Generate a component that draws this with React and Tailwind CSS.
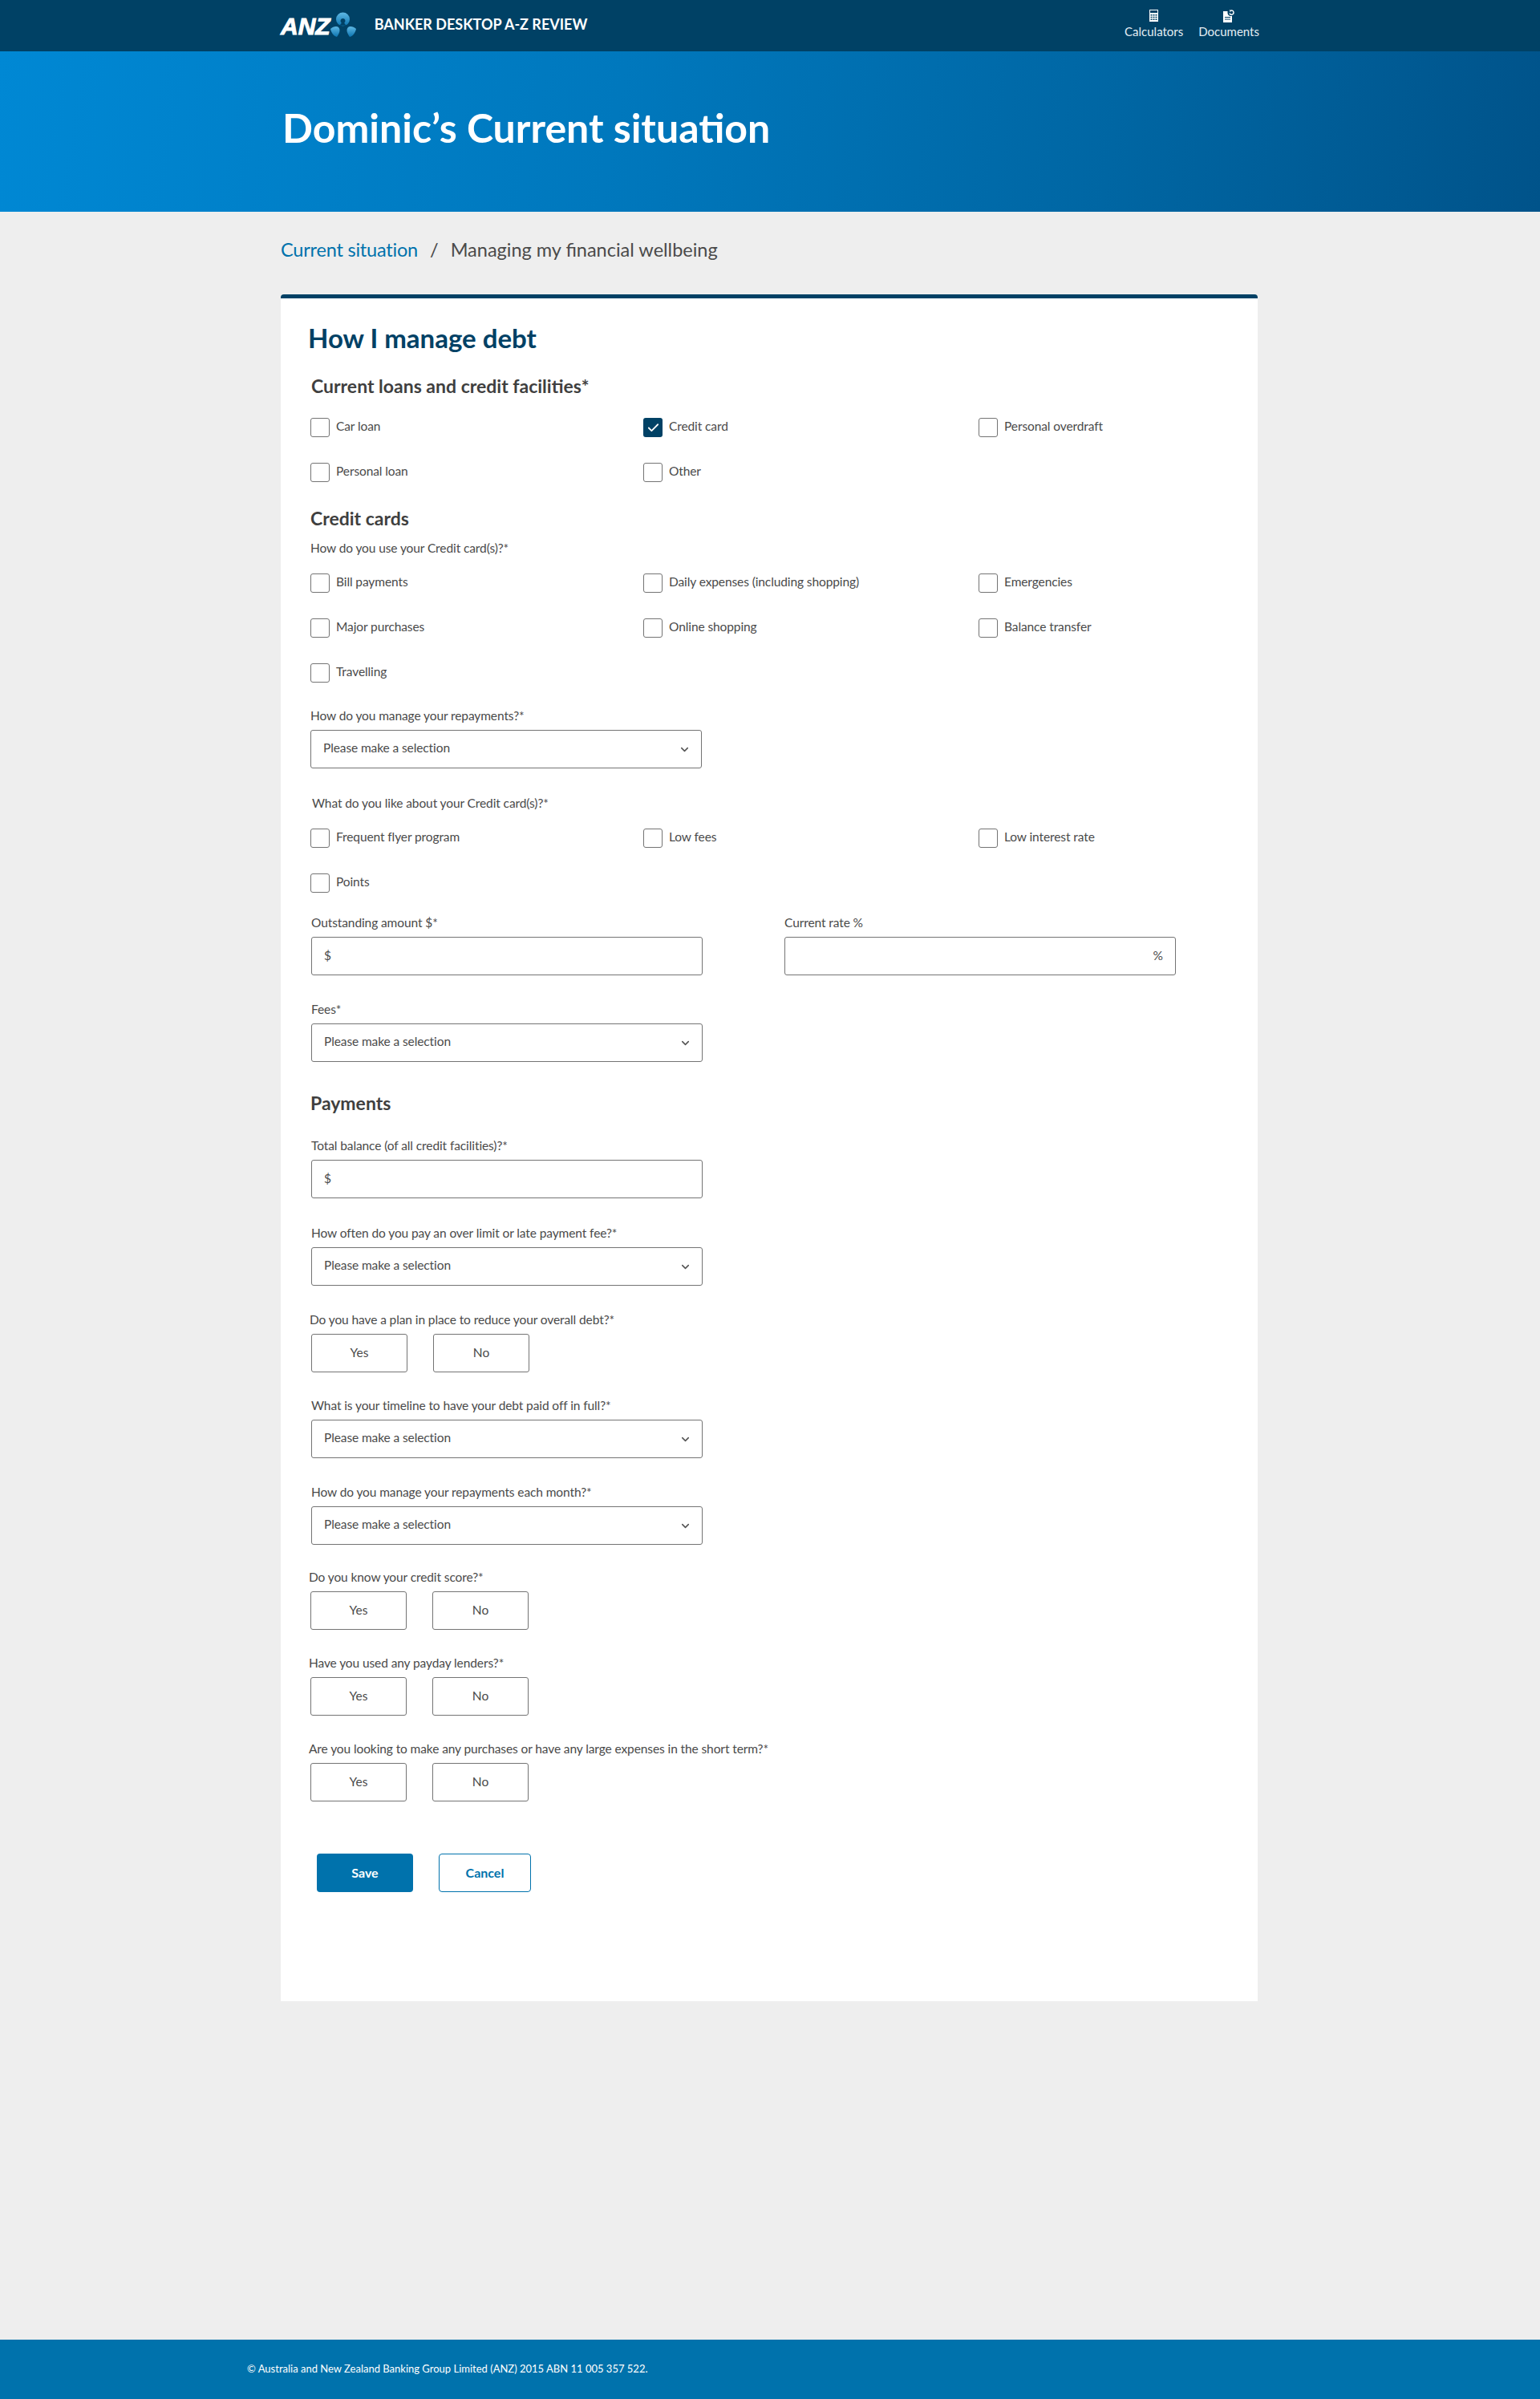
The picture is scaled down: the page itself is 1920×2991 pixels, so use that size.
import React from 'react'
import { ChevronDown, Check } from 'lucide-react'

const font = { fontFamily: 'Lato, "Open Sans", sans-serif' }

function Logo() {
  return (
    <div className="flex items-center">
      <span className="text-[30px] leading-none font-bold italic text-white font-['Liberation_Sans',sans-serif] [-webkit-text-stroke:1px_white] mt-[6px]">ANZ</span>
      <svg viewBox="0 0 32 32" className="w-[32px] h-[32px] mt-[2px]">
        <defs>
          <linearGradient id="drop" x1="0" y1="0" x2="0" y2="1">
            <stop offset="0" stopColor="#5fb8e4" />
            <stop offset="1" stopColor="#0b74b0" />
          </linearGradient>
        </defs>
        <circle cx="15.500" cy="9" r="8.500" fill="url(#drop)" />
        <path d="M15.500 8a3 3 0 0 1 1.800 5.400c.4 1.600 1.700 2.700 3.200 3.300h-10c1.500-.6 2.800-1.700 3.200-3.300A3 3 0 0 1 15.500 8z" fill="#004165" />
        <path d="M0 21c3-3 8-4 10-2 3 3 1 8-2 12-4-1-7-5-8-10z" fill="url(#drop)" />
        <path d="M32 21c-3-3-8-4-10-2-3 3-1 8 2 12 4-1 7-5 8-10z" fill="url(#drop)" />
      </svg>
    </div>
  )
}

function CalculatorIcon() {
  return (
    <svg viewBox="0 0 11 15" className="w-[11px] h-[15px]">
      <path fillRule="evenodd" fill="#fff" d="M0 0h11v15H0zM1 1v3h9V1zM1.500 6v1.500h2V6zm3 0v1.500h2V6zm3 0v1.500h2V6zm-6 2.700v1.500h2V8.700zm3 0v1.500h2V8.700zm3 0v1.500h2V8.700zm-6 2.700v1.500h2v-1.500zm3 0v1.500h2v-1.500zm3 0v1.500h2v-1.500z" />
    </svg>
  )
}

function DocumentIcon() {
  return (
    <svg viewBox="0 0 14 16" className="w-[14px] h-[16px]">
      <path fill="#fff" fillRule="evenodd" d="M0 2h5.500v2.500a4 4 0 0 0 5.500 3.300V16H0zM2 9v1h7V9zm0 2.500v1h7v-1z" />
      <path fill="none" stroke="#fff" strokeWidth="1.400" d="M8 4.500a2.600 2.600 0 1 0 2-3.500" />
      <path fill="#fff" d="M8 0l2.800 1.200L8.500 3z" />
    </svg>
  )
}

function Header() {
  return (
    <header className="h-[64px] bg-[#004165] flex">
      <div className="w-[1220px] mx-auto flex justify-between">
        <div className="flex items-center h-[60px] gap-[23px]">
          <Logo />
          <span className="text-[18px] font-bold text-white">BANKER DESKTOP A-Z REVIEW</span>
        </div>
        <nav className="flex gap-[19px] pt-[12px] text-[15px] text-[#e3edf3] leading-[20px]">
          <a className="flex flex-col items-center">
            <CalculatorIcon />
            <span className="mt-[2px]">Calculators</span>
          </a>
          <a className="flex flex-col items-center">
            <DocumentIcon />
            <span className="mt-[1px]">Documents</span>
          </a>
        </nav>
      </div>
    </header>
  )
}

function FieldLabel({ children, className }) {
  return <p className={`text-[15.500px] leading-[20px] tracking-[-0.100px] text-[#4a4a4a] ${className}`}>{children}</p>
}

function Heading({ children, className }) {
  return <h3 className={`text-[23px] leading-[28px] font-bold text-[#3f3f3f] ${className}`}>{children}</h3>
}

function CheckItem({ label, checked }) {
  return (
    <label className="flex items-center gap-[8px] h-[24px]">
      {checked ? (
        <span className="w-[24px] h-[24px] rounded-[3px] bg-[#004165] flex items-center justify-center">
          <Check size={17} color="#fff" strokeWidth={2.500} />
        </span>
      ) : (
        <span className="w-[24px] h-[24px] rounded-[3px] border border-[#747474] bg-white" />
      )}
      <span className="text-[15.500px] tracking-[-0.100px] text-[#4a4a4a] -mt-[2px]">{label}</span>
    </label>
  )
}

function CheckGrid({ items, className }) {
  return (
    <div className={`grid grid-cols-[415px_418px_1fr] gap-y-[32px] ${className}`}>
      {items.map((item) => (
        <CheckItem key={item} label={item} checked={item === 'Credit card'} />
      ))}
    </div>
  )
}

function SelectBox({ className }) {
  return (
    <div className={`w-[488px] h-[48px] border border-[#747474] rounded-[3px] flex items-center justify-between pl-[15px] pr-[13px] ${className}`}>
      <span className="text-[15.500px] tracking-[-0.100px] text-[#4a4a4a] -mt-[2px]">Please make a selection</span>
      <ChevronDown size={15} color="#555" strokeWidth={2.500} />
    </div>
  )
}

function TextBox({ prefix, suffix, className }) {
  return (
    <div className={`w-[488px] h-[48px] border border-[#747474] rounded-[3px] flex items-center justify-between px-[15px] text-[15.500px] text-[#4a4a4a] ${className}`}>
      <span>{prefix}</span>
      <span>{suffix}</span>
    </div>
  )
}

function YesNo({ className }) {
  return (
    <div className={`flex gap-[32px] mt-[8px] ${className}`}>
      {['Yes', 'No'].map((t) => (
        <button key={t} className="w-[120px] h-[48px] border border-[#747474] rounded-[3px] text-[15.500px] text-[#4a4a4a] bg-white">{t}</button>
      ))}
    </div>
  )
}

export default function App() {
  return (
    <div className="min-h-[2991px] flex flex-col bg-[#eeeeee]" style={font}>
      <Header />
      <div className="h-[200px] bg-[linear-gradient(100deg,#0088d4_0%,#0078bd_40%,#0066a3_72%,#00538a_100%)]">
        <h1 className="w-[1220px] mx-auto pt-[65px] pl-[2px] text-[50px] leading-[60px] font-bold text-white">Dominic’s Current situation</h1>
      </div>

      <main className="w-[1220px] mx-auto">
        <div className="pt-[32px] flex text-[23.500px] leading-[30px] text-[#4a4a4a]">
          <a className="text-[#0072ac] tracking-[-0.200px]">Current situation</a>
          <span className="mx-[15px]">/</span>
          <span>Managing my financial wellbeing</span>
        </div>

        <section className="mt-[41px] bg-white border-t-[5px] border-[#004165] rounded-t-[4px] w-[1218px] pl-[37px] pt-[29px] pb-[136px]">
          <h2 className="-ml-[3px] text-[33px] leading-[40px] font-bold text-[#004165]">How I manage debt</h2>

          <Heading className="mt-[26px] ml-[1px]">Current loans and credit facilities*</Heading>
          <CheckGrid className="mt-[26px]" items={['Car loan', 'Credit card', 'Personal overdraft', 'Personal loan', 'Other']} />

          <Heading className="mt-[31px]">Credit cards</Heading>
          <FieldLabel className="mt-[13px]">How do you use your Credit card(s)?*</FieldLabel>
          <CheckGrid className="mt-[22px]" items={['Bill payments', 'Daily expenses (including shopping)', 'Emergencies', 'Major purchases', 'Online shopping', 'Balance transfer', 'Travelling']} />

          <FieldLabel className="mt-[31px]">How do you manage your repayments?*</FieldLabel>
          <SelectBox className="mt-[8px]" />

          <FieldLabel className="mt-[33px] ml-[2px]">What do you like about your Credit card(s)?*</FieldLabel>
          <CheckGrid className="mt-[22px]" items={['Frequent flyer program', 'Low fees', 'Low interest rate', 'Points']} />

          <div className="mt-[27px] ml-[1px] flex gap-[102px]">
            <div>
              <FieldLabel>Outstanding amount $*</FieldLabel>
              <TextBox className="mt-[8px]" prefix="$" />
            </div>
            <div>
              <FieldLabel>Current rate %</FieldLabel>
              <TextBox className="mt-[8px]" suffix="%" />
            </div>
          </div>

          <FieldLabel className="mt-[32px] ml-[1px]">Fees*</FieldLabel>
          <SelectBox className="mt-[8px] ml-[1px]" />

          <Heading className="mt-[37px]">Payments</Heading>
          <FieldLabel className="mt-[29px] ml-[1px]">Total balance (of all credit facilities)?*</FieldLabel>
          <TextBox className="mt-[8px] ml-[1px]" prefix="$" />

          <FieldLabel className="mt-[33px] ml-[1px]">How often do you pay an over limit or late payment fee?*</FieldLabel>
          <SelectBox className="mt-[8px] ml-[1px]" />

          <FieldLabel className="mt-[32px] -ml-[1px]">Do you have a plan in place to reduce your overall debt?*</FieldLabel>
          <YesNo className="ml-[1px]" />

          <FieldLabel className="mt-[31px] ml-[1px]">What is your timeline to have your debt paid off in full?*</FieldLabel>
          <SelectBox className="mt-[8px] ml-[1px]" />

          <FieldLabel className="mt-[32px] ml-[1px]">How do you manage your repayments each month?*</FieldLabel>
          <SelectBox className="mt-[8px] ml-[1px]" />

          <FieldLabel className="mt-[30px] -ml-[2px]">Do you know your credit score?*</FieldLabel>
          <YesNo />

          <FieldLabel className="mt-[31px] -ml-[2px]">Have you used any payday lenders?*</FieldLabel>
          <YesNo />

          <FieldLabel className="mt-[31px] -ml-[2px]">Are you looking to make any purchases or have any large expenses in the short term?*</FieldLabel>
          <YesNo />

          <div className="mt-[65px] ml-[8px] flex gap-[32px]">
            <button className="w-[120px] h-[48px] rounded-[4px] bg-[#0072ac] text-white text-[16px] font-bold">Save</button>
            <button className="w-[115px] h-[48px] rounded-[4px] border border-[#0072ac] text-[#0072ac] text-[16px] font-bold">Cancel</button>
          </div>
        </section>
      </main>

      <footer className="mt-auto h-[74px] bg-[#0072ac] flex items-center pl-[308px] text-[13px] text-white">
        © Australia and New Zealand Banking Group Limited (ANZ) 2015 ABN 11 005 357 522.
      </footer>
    </div>
  )
}
